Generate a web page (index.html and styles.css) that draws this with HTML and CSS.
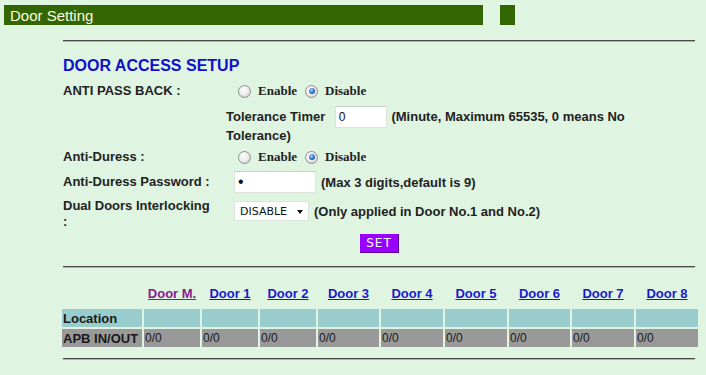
FILE: index.html
```html
<!DOCTYPE html>
<html>
<head>
<meta charset="utf-8">
<title>Door Setting</title>
<link rel="stylesheet" href="styles.css">
</head>
<body>
<div class="topbar">
  <div class="title-bar">Door Setting</div>
  <div class="title-block"></div>
</div>
<div class="content">
  <div class="rule"></div>
  <h1 class="heading">DOOR ACCESS SETUP</h1>
  <div class="form">
    <div class="label row-apb">ANTI PASS BACK :</div>
    <div class="value row-apb radios">
      <span class="radio"></span><span class="opt">Enable</span>
      <span class="radio checked gap"></span><span class="opt">Disable</span>
    </div>
    <div class="label"></div>
    <div class="tolerance">Tolerance Timer <input class="field tol" type="text" value="0"> (Minute, Maximum 65535, 0 means No Tolerance)</div>
    <div class="label row-duress">Anti-Duress :</div>
    <div class="value row-duress radios">
      <span class="radio"></span><span class="opt">Enable</span>
      <span class="radio checked gap"></span><span class="opt">Disable</span>
    </div>
    <div class="label row-pass">Anti-Duress Password :</div>
    <div class="value row-pass"><input class="field pass" type="password" value="9"><span class="note">(Max 3 digits,default is 9)</span></div>
    <div class="label row-dual">Dual Doors Interlocking :</div>
    <div class="value row-dual center"><span class="select">DISABLE<span class="arrow"></span></span><span class="note">(Only applied in Door No.1 and No.2)</span></div>
    <div class="set-row"><button class="set-btn" type="button">SET</button></div>
  </div>
  <div class="rule rule2"></div>
  <table class="doors">
    <colgroup>
      <col style="width:80px"><col style="width:56px"><col style="width:56px"><col style="width:56px"><col style="width:61px"><col style="width:62px"><col style="width:62px"><col style="width:61px"><col style="width:62px"><col style="width:62px">
    </colgroup>
    <tr class="head">
      <td></td>
      <td><a class="visited" href="#">Door M.</a></td>
      <td><a href="#">Door 1</a></td>
      <td><a href="#">Door 2</a></td>
      <td><a href="#">Door 3</a></td>
      <td><a href="#">Door 4</a></td>
      <td><a href="#">Door 5</a></td>
      <td><a href="#">Door 6</a></td>
      <td><a href="#">Door 7</a></td>
      <td><a href="#">Door 8</a></td>
    </tr>
    <tr class="loc">
      <th>Location</th><td></td><td></td><td></td><td></td><td></td><td></td><td></td><td></td><td></td>
    </tr>
    <tr class="apb">
      <th>APB IN/OUT</th><td>0/0</td><td>0/0</td><td>0/0</td><td>0/0</td><td>0/0</td><td>0/0</td><td>0/0</td><td>0/0</td><td>0/0</td>
    </tr>
  </table>
  <div class="rule rule3"></div>
</div>
</body>
</html>
```
FILE: styles.css
```css
html, body {
  margin: 0;
  padding: 0;
}
body {
  background: #dff5e2;
  font-family: "Liberation Sans", Arial, sans-serif;
  color: #1a1a1a;
  width: 706px;
  height: 375px;
  overflow: hidden;
}
.topbar {
  display: flex;
  padding: 5px 0 0 4px;
  gap: 17px;
}
.title-bar {
  width: 479px;
  height: 20px;
  background: #336600;
  color: #fbfbe0;
  font-family: "Liberation Sans", Arial, sans-serif;
  font-size: 15px;
  line-height: 21px;
  padding-left: 6px;
  box-sizing: border-box;
}
.title-block {
  width: 15px;
  height: 20px;
  background: #336600;
}
.content {
  margin-left: 63px;
  width: 632px;
}
.rule {
  height: 1px;
  background: #4a4a4a;
  border-bottom: 1px solid #a9b5aa;
  margin-top: 15px;
}
.heading {
  margin: 14px 0 0;
  font-size: 16px;
  line-height: 20px;
  color: #1010cc;
  font-weight: bold;
}
.form {
  display: grid;
  grid-template-columns: 171px 1fr;
  font-size: 13px;
  font-weight: bold;
  color: #222;
}
.label {
  line-height: 16px;
}
.row-apb {
  height: 24px;
  margin-top: 3px;
  display: flex;
  align-items: center;
}
.radios {
  display: flex;
  align-items: center;
}
.radio {
  width: 13px;
  height: 13px;
  border-radius: 50%;
  border: 1px solid #8f8f8f;
  background: radial-gradient(circle at 40% 35%, #ffffff 0%, #eeeeee 45%, #c4c4c4 100%);
  margin: 0 7px 0 4px;
  box-sizing: border-box;
  position: relative;
}
.radio.gap {
  margin-left: 8px;
}
.radio.checked::after {
  content: "";
  position: absolute;
  left: 2.5px;
  top: 2.5px;
  width: 6px;
  height: 6px;
  border-radius: 50%;
  background: radial-gradient(circle at 40% 35%, #a8d8ff 0%, #2a6cc8 55%, #163e8a 100%);
}
.opt {
  font-family: "Liberation Serif", "Times New Roman", serif;
  font-weight: bold;
  font-size: 13px;
}
.tolerance {
  margin-left: -8px;
  width: 420px;
  line-height: 15px;
  padding: 3px 0 2px;
}
.field {
  font-family: "Liberation Sans", Arial, sans-serif;
  font-size: 12px;
  background: #fff;
  border: 1px solid #dde4dd;
  border-top-color: #c8cfc8;
  box-sizing: border-box;
  padding: 0 3px;
  margin: 0 1px;
  vertical-align: baseline;
  color: #111;
  outline: none;
}
.tol {
  width: 52px;
  height: 22px;
  margin-left: 6px;
}
.pass {
  width: 82px;
  height: 22px;
  margin: 0 4px 0 0;
  font-size: 16px;
}
.row-duress {
  height: 24px;
  display: flex;
  align-items: center;
}
.row-pass {
  height: 26px;
  display: flex;
  align-items: center;
}
.note {
  margin-left: 1px;
}
.row-dual.label {
  padding-top: 3px;
  height: 29px;
  width: 150px;
}
.row-dual.center {
  display: flex;
  align-items: center;
}
.select {
  display: inline-flex;
  align-items: center;
  width: 75px;
  height: 20px;
  box-sizing: border-box;
  background: #fff;
  border: 1px solid #dde4dd;
  font-family: "DejaVu Sans", Verdana, sans-serif;
  font-weight: normal;
  font-size: 11px;
  color: #111;
  padding-left: 5px;
  margin-right: 4px;
  position: relative;
}
.arrow {
  position: absolute;
  right: 5px;
  top: 8px;
  width: 0;
  height: 0;
  border-left: 3.5px solid transparent;
  border-right: 3.5px solid transparent;
  border-top: 4px solid #111;
}
.set-row {
  grid-column: 1 / 3;
  display: flex;
  justify-content: center;
  padding: 7px 0 0 1px;
  height: 26px;
}
.set-btn {
  width: 39px;
  height: 19px;
  background: #9900ff;
  border: none;
  border-right: 1px solid #5a0099;
  border-bottom: 1px solid #5a0099;
  color: #fff;
  font-family: "DejaVu Sans", Verdana, sans-serif;
  font-size: 12px;
  letter-spacing: 1px;
  padding: 0;
  line-height: 18px;
}
.rule2 {
  margin-top: 6px;
}
.doors {
  table-layout: fixed;
  border-collapse: separate;
  border-spacing: 2px;
  margin: 15px 0 0 -3px;
  width: 640px;
  font-size: 12px;
}
.doors td, .doors th {
  padding: 0 1px;
  text-align: left;
  white-space: nowrap;
  overflow: hidden;
}
.head td {
  height: 22px;
  text-align: center;
  font-size: 13px;
  font-weight: bold;
  vertical-align: top;
  line-height: 18px;
  padding: 0;
}
.head a {
  color: #1a1acc;
  text-decoration: underline;
}
.head a.visited {
  color: #8a1a8a;
}
.loc th, .loc td {
  background: #99cccc;
  height: 18px;
}
.apb th, .apb td {
  background: #999999;
  height: 18px;
}
.doors th {
  font-size: 13px;
  font-weight: bold;
  color: #1a1a1a;
}
.doors td {
  color: #1a1a1a;
}
.rule3 {
  margin-top: 9px;
}
```
